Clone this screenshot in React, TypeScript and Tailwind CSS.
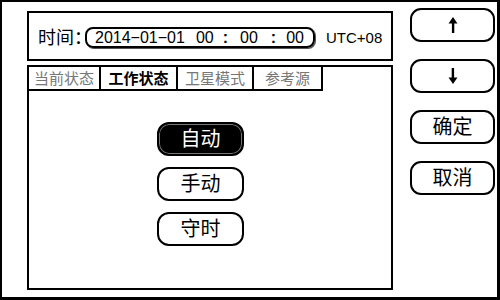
import React from "react";

const F = { fontFamily: '"Liberation Sans", "Noto Sans CJK SC", sans-serif' };

function Arrow({ down }: { down?: boolean }) {
  return (
    <svg width="10" height="16" viewBox="0 0 10 16" className={down ? "rotate-180" : ""}>
      <polygon points="5,0 0.5,6.5 9.5,6.5" fill="black" />
      <rect x="3.9" y="5" width="2.4" height="11" fill="black" />
    </svg>
  );
}

function SideBtn({ children }: { children: React.ReactNode }) {
  return (
    <div className="h-[34px] w-[85px] border-2 border-black rounded-[11px] flex items-center justify-center text-[20px] leading-none text-black">
      {children}
    </div>
  );
}

function ModeBtn({ label, active }: { label: string; active?: boolean }) {
  return (
    <div
      className={
        "h-[34px] w-[87px] border-2 border-black rounded-[12px] flex items-center justify-center text-[20px] leading-none " +
        (active ? "bg-black text-white shadow-[inset_0_0_0_1px_#777]" : "bg-white text-black")
      }
    >
      {label}
    </div>
  );
}

export default function App() {
  const tabs = [
    { t: "当前状态", w: "w-[72px]" },
    { t: "工作状态", w: "w-[77px]", active: true },
    { t: "卫星模式", w: "w-[76px]" },
    { t: "参考源", w: "w-[69px]" },
  ];
  return (
    <div
      style={F}
      className="w-[500px] h-[300px] bg-white border-l-2 border-t-2 border-r-[3px] border-b-[3px] border-black flex pl-[25px]"
    >
      <div className="w-[366px] flex flex-col pt-[9px]">
        <div className="h-[50px] border-2 border-black flex items-center pl-[9px] pt-[3px]">
          <span className="text-[18px] leading-none">时间</span>
          <span className="text-[18px] leading-none w-[11px] inline-block">：</span>
          <div className="h-[21px] w-[230px] border-2 border-black rounded-[8px] shadow-[1px_1px_0_#555] flex items-center pl-[8px] text-[16px] leading-none">
            <span>2014−01−01</span>
            <span className="ml-[11px]">00</span>
            <span className="ml-[9px] font-bold">:</span>
            <span className="ml-[12px]">00</span>
            <span className="ml-[13px] font-bold">:</span>
            <span className="ml-[10px]">00</span>
          </div>
          <span className="ml-[11px] text-[15px] leading-none">UTC+08</span>
        </div>
        <div className="mt-[4px] h-[225px] border-2 border-black flex flex-col">
          <div className="flex self-start border-b-2 border-black h-[24px]">
            {tabs.map((tab) => (
              <div
                key={tab.t}
                className={
                  tab.w +
                  " border-r-2 border-black flex items-center justify-center text-[15px] leading-none " +
                  (tab.active ? "text-black font-bold" : "text-[#777777]")
                }
              >
                {tab.t}
              </div>
            ))}
          </div>
          <div className="flex flex-col gap-[11px] pl-[128px] pt-[31px]">
            <ModeBtn label="自动" active />
            <ModeBtn label="手动" />
            <ModeBtn label="守时" />
          </div>
        </div>
      </div>
      <div className="ml-[17px] flex flex-col gap-[17px] pt-[6px]">
        <SideBtn>
          <Arrow />
        </SideBtn>
        <SideBtn>
          <Arrow down />
        </SideBtn>
        <SideBtn>确定</SideBtn>
        <SideBtn>取消</SideBtn>
      </div>
    </div>
  );
}
